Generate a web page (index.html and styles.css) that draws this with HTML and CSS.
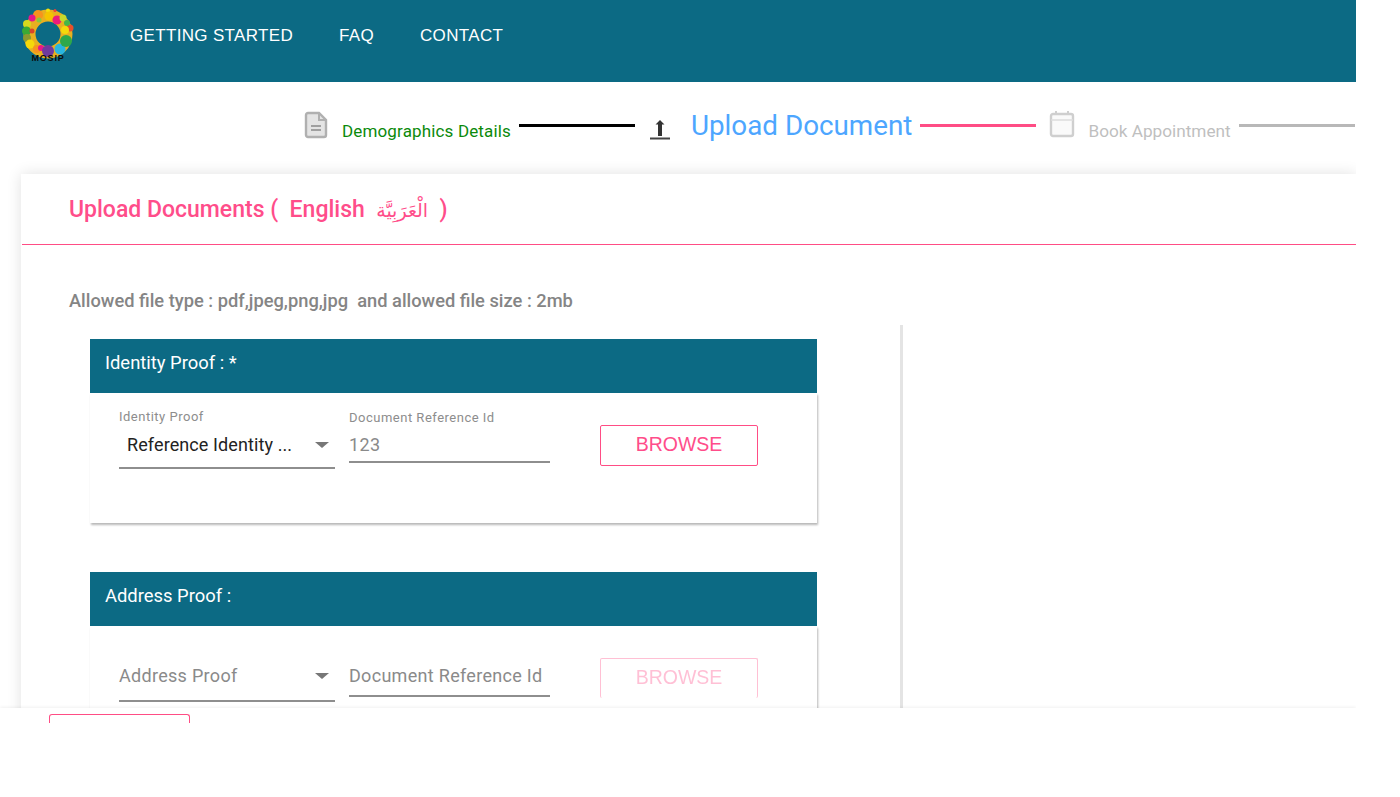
FILE: index.html
```html
<!DOCTYPE html>
<html lang="en">
<head>
<meta charset="utf-8">
<title>Upload Documents</title>
<link rel="stylesheet" href="styles.css">
</head>
<body>
<div class="page">
  <header class="topbar">
    <div class="logo">
      <svg class="logo-mark" width="52" height="46" viewBox="0 0 52 46">
        <circle class="ring" cx="26" cy="27" r="18.500"/>
        <g>
          <circle cx="26" cy="3.500" r="2" fill="#f5e20a"/><circle cx="33" cy="3.500" r="1.500" fill="#ef4136"/>
          <circle cx="16" cy="8" r="5" fill="#f7941d"/><circle cx="27" cy="9" r="4.500" fill="#f5c400"/>
          <circle cx="10" cy="11" r="3.500" fill="#e6178a"/><circle cx="35" cy="13" r="4.500" fill="#ec1c7c"/>
          <circle cx="41" cy="11" r="3.500" fill="#c5d92d"/><circle cx="48" cy="21" r="3.500" fill="#e8502a"/>
          <circle cx="5" cy="17" r="4" fill="#d8d81e"/><circle cx="4.500" cy="24" r="4.500" fill="#39a935"/>
          <circle cx="5" cy="31" r="4" fill="#8a9a30"/><circle cx="8" cy="37" r="4.500" fill="#f5d90a"/>
          <circle cx="15" cy="42" r="4" fill="#f7941d"/><circle cx="19" cy="41" r="3" fill="#e6178a"/>
          <circle cx="26" cy="44" r="6" fill="#6f3a9e"/><circle cx="38" cy="42" r="5.500" fill="#29b6e0"/>
          <circle cx="44" cy="34" r="6" fill="#2ea84a"/><circle cx="43" cy="23" r="4" fill="#f5d90a"/>
          <circle cx="45" cy="16" r="3" fill="#45b649"/><circle cx="17" cy="13" r="2.500" fill="#8cc63f"/>
          <circle cx="10" cy="24" r="2.500" fill="#d9442a"/>
        </g>
      </svg>
      <span class="logo-text">MOSIP</span>
    </div>
    <nav class="nav">
      <a class="nav-link">GETTING STARTED</a>
      <a class="nav-link">FAQ</a>
      <a class="nav-link">CONTACT</a>
    </nav>
  </header>

  <div class="stepper">
    <svg class="step-icon" width="24" height="28" viewBox="0 0 24 28">
      <path d="M4 2h11l7 7v15a2 2 0 0 1-2 2H4a2 2 0 0 1-2-2V4a2 2 0 0 1 2-2z" fill="#e4e4e4" stroke="#b0b0b0" stroke-width="2.400"/>
      <path d="M15 2v7h7" fill="none" stroke="#b0b0b0" stroke-width="2"/>
      <path d="M7 15h10M7 19h10" stroke="#a0a0a0" stroke-width="2"/>
    </svg>
    <span class="step-label done">Demographics Details</span>
    <span class="step-line black"></span>
    <svg class="step-icon upload" width="20" height="25" viewBox="0 0 20 25">
      <path d="M10 5l4.500 4.500H12V21H8V9.500H5.500z" fill="#333"/>
      <path d="M0 23.500h20" stroke="#444" stroke-width="2"/>
    </svg>
    <span class="step-label active">Upload Document</span>
    <span class="step-line pink"></span>
    <svg class="step-icon calendar" width="26" height="28" viewBox="0 0 26 28">
      <rect x="2" y="4" width="22" height="22" rx="2" fill="#fafafa" stroke="#cfcfcf" stroke-width="2.400"/>
      <path d="M2 10h22" stroke="#dcdcdc" stroke-width="1.500"/>
      <path d="M7 1v4M19 1v4" stroke="#cfcfcf" stroke-width="2"/>
    </svg>
    <span class="step-label pending">Book Appointment</span>
    <span class="step-line gray"></span>
  </div>

  <main class="panel">
    <h1 class="panel-title">Upload Documents (&nbsp; English &nbsp;<span class="arabic">الْعَرَبِيَّة</span>&nbsp; )</h1>
    <p class="note">Allowed file type : pdf,jpeg,png,jpg &nbsp;and allowed file size : 2mb</p>
    <div class="columns">
      <section class="doc-column">
        <article class="doc-card">
          <h2 class="doc-head">Identity Proof : *</h2>
          <div class="doc-body filled">
            <div class="select">
              <label class="float-label">Identity Proof</label>
              <div class="select-value"><span class="value-text">Reference Identity ...</span><i class="caret"></i></div>
            </div>
            <div class="field">
              <label class="float-label">Document Reference Id</label>
              <div class="field-value">123</div>
            </div>
            <button class="browse">BROWSE</button>
          </div>
        </article>
        <article class="doc-card">
          <h2 class="doc-head">Address Proof :</h2>
          <div class="doc-body empty">
            <div class="select">
              <div class="select-value"><span class="placeholder">Address Proof</span><i class="caret"></i></div>
            </div>
            <div class="field">
              <div class="field-value"><span class="placeholder">Document Reference Id</span></div>
            </div>
            <button class="browse disabled">BROWSE</button>
          </div>
        </article>
      </section>
    </div>
  </main>

  <footer class="footer">
    <button class="back"></button>
  </footer>
</div>
</body>
</html>
```
FILE: styles.css
```css
* { box-sizing: border-box; }
html, body { margin: 0; padding: 0; background: #fff; overflow: hidden; }
body { font-family: Roboto, "DejaVu Sans", sans-serif; }
.page { position: relative; width: 1356px; height: 797px; overflow: hidden; background: #fff; }

.topbar { height: 82px; background: #0c6a84; display: flex; align-items: flex-start; padding-left: 22px; }
.logo { position: relative; width: 52px; height: 66px; margin-top: 7px; }
.logo-mark { display: block; filter: blur(.5px); overflow: visible; }
.ring { fill: none; stroke: #e8b020; stroke-width: 12; }
.logo-text { position: absolute; left: 6px; top: 46px; width: 40px; text-align: center; font: 700 9px/10px "Liberation Sans", sans-serif; letter-spacing: 0.8px; color: #0b0b0b; }
.nav { display: flex; gap: 46px; margin-left: 56px; padding-top: 26px; }
.nav-link { font: 400 17px/20px "Liberation Sans", Arial, sans-serif; color: #fff; letter-spacing: 0.33px; }

.stepper { height: 92px; display: flex; align-items: flex-start; padding-left: 304px; }
.step-icon { flex: none; margin-top: 29px; filter: blur(.4px); }
.step-icon.upload { margin-top: 33px; margin-left: 15px; }
.step-icon.calendar { margin-top: 28px; margin-left: 13px; }
.step-label { white-space: nowrap; }
.done { font-size: 17px; line-height: 20px; color: #0b8a0b; margin-top: 39px; margin-left: 14px; letter-spacing: 0.15px; }
.active { font-size: 27.800px; line-height: 32px; color: #4da6ff; margin-top: 28px; margin-left: 21px; }
.pending { font-size: 17.200px; line-height: 20px; color: #bfbfbf; margin-top: 39px; margin-left: 13px; }
.step-line { flex: none; width: 116px; height: 3px; margin-top: 42px; margin-left: 8px; }
.step-line.black { background: #000; }
.step-line.pink { background: #ff4d85; }
.step-line.gray { background: #b8b8b8; }

.panel { margin-left: 21px; height: 640px; background: #fff; box-shadow: 0 0 14px rgba(0,0,0,.12); }
.panel-title { margin: 0 0 0 1px; height: 71px; padding: 21px 0 0 47px; font-size: 23px; line-height: 30px; font-weight: 500; color: #ff4d8a; border-bottom: 1px solid #ff4d85; }
.arabic { font-family: "DejaVu Sans", sans-serif; font-size: 19px; font-weight: 400; }
.note { margin: 0; padding: 45px 0 0 48px; height: 80px; font-size: 18.300px; line-height: 21px; font-weight: 500; color: #858585; }
.columns { display: flex; }
.doc-column { width: 882px; height: 400px; border-right: 3px solid #e4e4e4; padding: 14px 0 0 69px; }

.doc-card { width: 727px; margin-bottom: 49px; }
.doc-head { margin: 0; height: 54px; padding: 14px 15px 0; background: #0c6a84; font-size: 18.400px; line-height: 20px; font-weight: 400; color: #fff; }
.doc-body { position: relative; height: 130px; display: flex; align-items: flex-start; padding-left: 29px; background: #fff; box-shadow: 1px 2px 2px rgba(0,0,0,.28); }
.select { width: 216px; flex: none; }
.field { width: 201px; flex: none; margin-left: 14px; }
.float-label { display: block; font-size: 13px; line-height: 16px; color: #8d8d8d; letter-spacing: 0.5px; }
.select-value { display: flex; align-items: center; justify-content: space-between; height: 44px; padding: 0 6px 4px 8px; border-bottom: 2px solid #8e8e8e; font-size: 18px; color: #222; }
.value-text { white-space: nowrap; letter-spacing: 0.1px; }
.caret { width: 0; height: 0; border-left: 7.500px solid transparent; border-right: 7.500px solid transparent; border-top: 6px solid #777; margin-top: 2px; }
.field-value { height: 37px; padding-top: 7px; border-bottom: 2px solid #8e8e8e; font-size: 18px; line-height: 24px; color: #8a8a8a; letter-spacing: 0.4px; }
.filled { padding-top: 16px; }
.filled .field { padding-top: 1px; }
.empty { padding-top: 32px; padding-left: 29px; }
.empty .select-value { padding-left: 0; padding-bottom: 8px; height: 44px; }
.empty .field-value { height: 39px; line-height: 36px; padding-top: 0; }
.placeholder { font-size: 18px; color: #8a8a8a; letter-spacing: 0.3px; white-space: nowrap; }
.browse { flex: none; width: 158px; height: 41px; margin-left: 50px; border: 1px solid #ff4d85; border-radius: 2px; background: #fff; color: #ff4d8a; font: 400 19.500px/1 "Liberation Sans", Arial, sans-serif; padding: 0 0 1px; }
.filled .browse { margin-top: 16px; }
.empty .browse { opacity: 0.35; height: 40px; border-bottom: 0; padding-bottom: 1px; }

.footer { position: absolute; left: 0; right: 0; top: 708px; bottom: 0; background: #fff; box-shadow: 0 -1px 3px rgba(0,0,0,.06); padding: 6px 0 0 49px; }
.back { display: block; width: 141px; height: 9px; background: #fff; border: 1px solid #ff4d85; border-bottom: 0; border-radius: 3px 3px 0 0; padding: 0; }
```
